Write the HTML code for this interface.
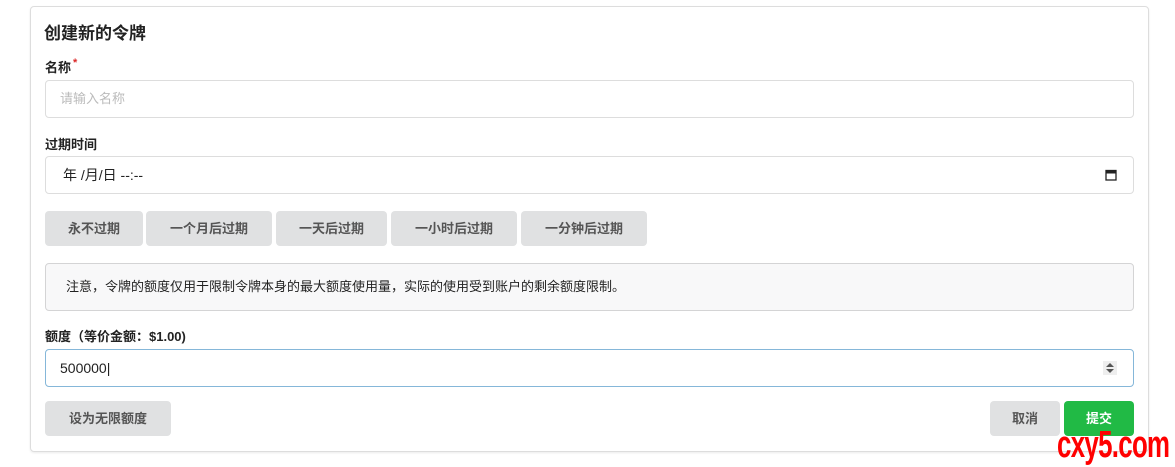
<!DOCTYPE html>
<html><head><meta charset="utf-8"><style>
body{margin:0;width:1175px;height:466px;background:#fff;font-family:"Liberation Sans","Noto Sans CJK SC",sans-serif;color:#222;position:relative;overflow:hidden}
.card{position:absolute;left:30px;top:6px;width:1117px;height:444px;border:1px solid #ddd;border-radius:4px;box-shadow:0 1px 2px rgba(0,0,0,.08)}
.a{position:absolute}
h1{position:absolute;left:44px;top:19px;margin:0;font-size:17px;font-weight:bold;color:#222}
.lbl{position:absolute;left:45px;font-size:13px;font-weight:bold;color:#222}
.inp{position:absolute;left:45px;width:1087px;height:36px;border:1px solid #ddd;border-radius:4px;font-size:13px;line-height:36px;box-sizing:content-box}
.btn{position:absolute;top:211px;height:35px;line-height:35px;background:#e0e1e2;border-radius:4px;font-size:13px;color:#555;text-align:center;font-weight:bold}
</style></head><body>
<div class="card"></div>
<h1>创建新的令牌</h1>
<div class="lbl" style="top:57px">名称<span style="color:#db2828;font-size:11px;vertical-align:top;margin-left:2px">*</span></div>
<div class="inp" style="top:80px"><span style="margin-left:14px;color:#bbb">请输入名称</span></div>
<div class="lbl" style="top:134px">过期时间</div>
<div class="inp" style="top:156px"><span style="margin-left:17px;color:#222;font-size:14px">年 /月/日 --:--</span>
<svg class="a" style="right:16px;top:12px" width="12" height="12" viewBox="0 0 12 12"><rect x="1" y="1.5" width="10" height="9.5" fill="none" stroke="#222" stroke-width="1.3"/><rect x="1" y="1.5" width="10" height="3" fill="#222"/></svg></div>
<div class="btn" style="left:45px;width:98px">永不过期</div>
<div class="btn" style="left:146px;width:126px">一个月后过期</div>
<div class="btn" style="left:276px;width:111px">一天后过期</div>
<div class="btn" style="left:391px;width:126px">一小时后过期</div>
<div class="btn" style="left:521px;width:126px">一分钟后过期</div>
<div class="a" style="left:45px;top:263px;width:1087px;height:46px;border:1px solid #d4d4d5;border-radius:4px;background:#f8f8f9;font-size:13px;line-height:46px;color:#222"><span style="margin-left:20px">注意，令牌的额度仅用于限制令牌本身的最大额度使用量，实际的使用受到账户的剩余额度限制。</span></div>
<div class="lbl" style="top:326px">额度（等价金额：$1.00)</div>
<div class="inp" style="top:349px;border-color:#85b7d9"><span style="margin-left:14px;color:#222;font-size:14px">500000|</span>
<svg class="a" style="right:16px;top:11px" width="14" height="14" viewBox="0 0 14 14"><rect width="14" height="14" fill="#eee"/><path d="M3 6L7 2L11 6ZM3 8L7 12L11 8Z" fill="#555"/></svg></div>
<div class="btn" style="left:45px;width:126px;top:401px">设为无限额度</div>
<div class="btn" style="left:990px;width:70px;top:401px">取消</div>
<div class="btn" style="left:1064px;width:70px;top:401px;background:#21ba45;color:#fff">提交</div>
<div class="a" style="left:1057px;top:424px;font-family:'Liberation Sans',sans-serif;font-weight:bold;font-size:38px;color:#f00;letter-spacing:-1px;transform:scaleX(.68);transform-origin:left;white-space:nowrap">cxy5.com</div>
</body></html>
